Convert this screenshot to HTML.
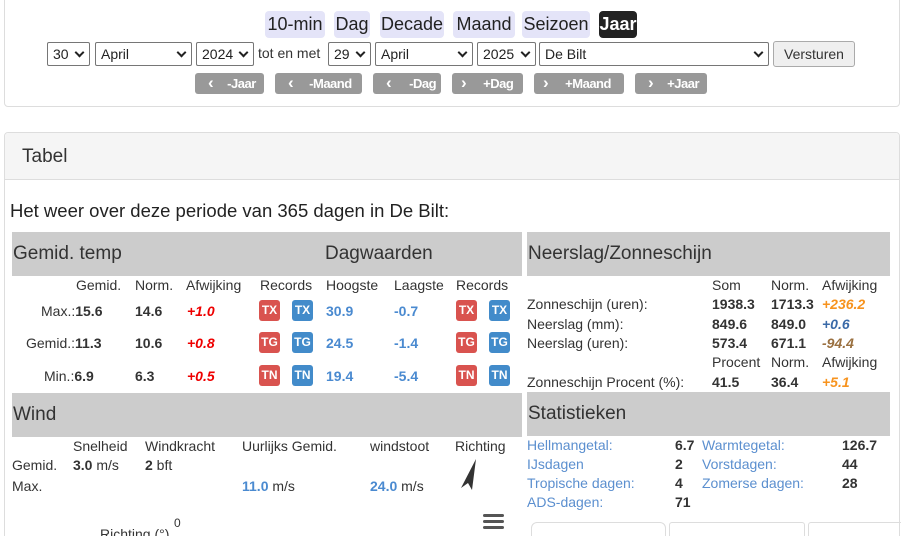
<!DOCTYPE html>
<html><head><meta charset="utf-8"><style>
*{box-sizing:border-box;margin:0;padding:0}
html,body{width:901px;height:536px;overflow:hidden}
body{background:#fff;font-family:"Liberation Sans",sans-serif;color:#333;font-size:14px;position:relative}
.a{position:absolute;white-space:nowrap}
.panel{position:absolute;border:1px solid #ddd;border-radius:4px}
.tab{position:absolute;top:11px;height:27px;background:#e4e4f8;border-radius:4px;font-size:18px;line-height:27px;text-align:center;color:#222}
.sel{position:absolute;top:42px;height:24px;border:1px solid #767676;border-radius:2px;font-size:14px;line-height:22px;padding-left:5px;background:#fff;color:#222}
.sel:after{content:"";position:absolute;right:6px;top:6px;width:5px;height:5px;border-right:2px solid #222;border-bottom:2px solid #222;transform:rotate(45deg)}
.nb{position:absolute;top:73px;height:21px;background:#999;color:#fff;border-radius:3px;font-size:13px;font-weight:bold;line-height:21px;letter-spacing:-.5px}
.nb i{font-style:normal;font-size:17px;display:inline-block;vertical-align:top;line-height:19px}
.gh{position:absolute;background:#ccc;font-size:19px;color:#333;padding-left:1px}
.b{font-weight:bold}
.bl{color:#4a8ad0;font-weight:bold}
.rd{color:#e00;font-weight:bold;font-style:italic}
.bd{position:absolute;width:21px;height:21px;border-radius:3px;color:#fff;font-weight:bold;font-size:12px;line-height:21px;text-align:center}
.r{background:#d9534f}.u{background:#428bca}
.lk{color:#5b8fcf}
</style></head><body>
<div class="panel" style="left:4px;top:-4px;width:896px;height:111px"></div>
<div class="tab" style="left:265px;width:60px">10-min</div>
<div class="tab" style="left:334px;width:36px">Dag</div>
<div class="tab" style="left:380px;width:64px">Decade</div>
<div class="tab" style="left:453px;width:62px">Maand</div>
<div class="tab" style="left:522px;width:68px">Seizoen</div>
<div class="tab" style="left:599px;width:38px;background:#222;color:#fff;font-weight:bold">Jaar</div>
<div class="sel" style="left:47px;width:43px">30</div>
<div class="sel" style="left:95px;width:97px">April</div>
<div class="sel" style="left:196px;width:58px">2024</div>
<div class="a" style="left:258px;top:45px;font-size:14px">tot en met</div>
<div class="sel" style="left:328px;width:43px">29</div>
<div class="sel" style="left:375px;width:98px">April</div>
<div class="sel" style="left:477px;width:59px">2025</div>
<div class="sel" style="left:539px;width:230px">De Bilt</div>
<div class="a" style="left:773px;top:41px;width:82px;height:26px;border:1px solid #aaa;border-radius:3px;background:#efefef;font-size:14px;line-height:24px;text-align:center">Versturen</div>
<div class="nb" style="left:195px;width:69px"><i style="margin-left:13px">‹</i><span style="margin-left:14px">-Jaar</span></div>
<div class="nb" style="left:275px;width:87px"><i style="margin-left:13px">‹</i><span style="margin-left:16px">-Maand</span></div>
<div class="nb" style="left:373px;width:68px"><i style="margin-left:13px">‹</i><span style="margin-left:18px">-Dag</span></div>
<div class="nb" style="left:452px;width:71px"><i style="margin-left:9px">›</i><span style="margin-left:17px">+Dag</span></div>
<div class="nb" style="left:534px;width:90px"><i style="margin-left:9px">›</i><span style="margin-left:17px">+Maand</span></div>
<div class="nb" style="left:635px;width:72px"><i style="margin-left:13px">›</i><span style="margin-left:14px">+Jaar</span></div>

<div class="panel" style="left:4px;top:132px;width:896px;height:420px"></div>
<div class="a" style="left:5px;top:133px;width:894px;height:47px;background:#f5f5f5;border-bottom:1px solid #ddd;border-radius:4px 4px 0 0"></div>
<div class="a" style="left:22px;top:146px;font-size:19px">Tabel</div>
<div class="a" style="left:10px;top:200px;font-size:18.5px;color:#222">Het weer over deze periode van 365 dagen in De Bilt:</div>

<div class="gh" style="left:12px;top:232px;width:510px;height:44px;line-height:44px">Gemid. temp<span style="position:absolute;left:313px">Dagwaarden</span></div>
<div class="a" style="left:76px;top:277px">Gemid.</div>
<div class="a" style="left:135px;top:277px">Norm.</div>
<div class="a" style="left:186px;top:277px">Afwijking</div>
<div class="a" style="left:260px;top:277px">Records</div>
<div class="a" style="left:326px;top:277px">Hoogste</div>
<div class="a" style="left:394px;top:277px">Laagste</div>
<div class="a" style="left:456px;top:277px">Records</div>

<div class="a" style="left:41px;top:303px">Max.:<b>15.6</b></div>
<div class="a b" style="left:135px;top:303px">14.6</div>
<div class="a rd" style="left:187px;top:303px">+1.0</div>
<div class="bd r" style="left:259px;top:300px">TX</div><div class="bd u" style="left:292px;top:300px">TX</div>
<div class="a bl" style="left:326px;top:303px">30.9</div>
<div class="a bl" style="left:394px;top:303px">-0.7</div>
<div class="bd r" style="left:456px;top:300px">TX</div><div class="bd u" style="left:489px;top:300px">TX</div>

<div class="a" style="left:26px;top:335px">Gemid.:<b>11.3</b></div>
<div class="a b" style="left:135px;top:335px">10.6</div>
<div class="a rd" style="left:187px;top:335px">+0.8</div>
<div class="bd r" style="left:259px;top:332px">TG</div><div class="bd u" style="left:292px;top:332px">TG</div>
<div class="a bl" style="left:326px;top:335px">24.5</div>
<div class="a bl" style="left:394px;top:335px">-1.4</div>
<div class="bd r" style="left:456px;top:332px">TG</div><div class="bd u" style="left:489px;top:332px">TG</div>

<div class="a" style="left:44px;top:368px">Min.:<b>6.9</b></div>
<div class="a b" style="left:135px;top:368px">6.3</div>
<div class="a rd" style="left:187px;top:368px">+0.5</div>
<div class="bd r" style="left:259px;top:365px">TN</div><div class="bd u" style="left:292px;top:365px">TN</div>
<div class="a bl" style="left:326px;top:368px">19.4</div>
<div class="a bl" style="left:394px;top:368px">-5.4</div>
<div class="bd r" style="left:456px;top:365px">TN</div><div class="bd u" style="left:489px;top:365px">TN</div>

<div class="gh" style="left:12px;top:393px;width:510px;height:44px;line-height:44px">Wind</div>
<div class="a" style="left:73px;top:438px">Snelheid</div>
<div class="a" style="left:145px;top:438px">Windkracht</div>
<div class="a" style="left:242px;top:438px">Uurlijks Gemid.</div>
<div class="a" style="left:370px;top:438px">windstoot</div>
<div class="a" style="left:455px;top:438px">Richting</div>
<div class="a" style="left:12px;top:457px">Gemid.</div>
<div class="a" style="left:73px;top:457px"><b>3.0</b> m/s</div>
<div class="a" style="left:145px;top:457px"><b>2</b> bft</div>
<div class="a" style="left:12px;top:478px">Max.</div>
<div class="a" style="left:242px;top:478px"><span class="bl">11.0</span> m/s</div>
<div class="a" style="left:370px;top:478px"><span class="bl">24.0</span> m/s</div>
<svg class="a" style="left:458px;top:458px" width="20" height="34"><path d="M18 1 L3 30 L10 25 L14 32 Z" fill="#333"/></svg>
<div class="a" style="left:174px;top:516px;font-size:12px">0</div>
<div class="a" style="left:100px;top:526px;font-size:14px">Richting (°)</div>
<svg class="a" style="left:483px;top:513px" width="22" height="18"><rect x="0" y="1" width="21" height="3" rx="1.5" fill="#555"/><rect x="0" y="7" width="21" height="3" rx="1.5" fill="#555"/><rect x="0" y="13" width="21" height="3" rx="1.5" fill="#555"/></svg>

<div class="gh" style="left:527px;top:232px;width:363px;height:44px;line-height:44px">Neerslag/Zonneschijn</div>
<div class="a" style="left:712px;top:277px">Som</div>
<div class="a" style="left:771px;top:277px">Norm.</div>
<div class="a" style="left:822px;top:277px">Afwijking</div>
<div class="a" style="left:527px;top:296px">Zonneschijn (uren):</div>
<div class="a b" style="left:712px;top:296px">1938.3</div>
<div class="a b" style="left:771px;top:296px">1713.3</div>
<div class="a" style="left:822px;top:296px;color:#f7931e;font-weight:bold;font-style:italic">+236.2</div>
<div class="a" style="left:527px;top:316px">Neerslag (mm):</div>
<div class="a b" style="left:712px;top:316px">849.6</div>
<div class="a b" style="left:771px;top:316px">849.0</div>
<div class="a" style="left:822px;top:316px;color:#3a6aa8;font-weight:bold;font-style:italic">+0.6</div>
<div class="a" style="left:527px;top:335px">Neerslag (uren):</div>
<div class="a b" style="left:712px;top:335px">573.4</div>
<div class="a b" style="left:771px;top:335px">671.1</div>
<div class="a" style="left:822px;top:335px;color:#9a7040;font-weight:bold;font-style:italic">-94.4</div>
<div class="a" style="left:712px;top:354px">Procent</div>
<div class="a" style="left:771px;top:354px">Norm.</div>
<div class="a" style="left:822px;top:354px">Afwijking</div>
<div class="a" style="left:527px;top:374px">Zonneschijn Procent (%):</div>
<div class="a b" style="left:712px;top:374px">41.5</div>
<div class="a b" style="left:771px;top:374px">36.4</div>
<div class="a" style="left:822px;top:374px;color:#f7931e;font-weight:bold;font-style:italic">+5.1</div>

<div class="gh" style="left:527px;top:392px;width:363px;height:44px;line-height:44px">Statistieken</div>
<div class="a lk" style="left:527px;top:437px">Hellmangetal:</div><div class="a b" style="left:675px;top:437px">6.7</div>
<div class="a lk" style="left:702px;top:437px">Warmtegetal:</div><div class="a b" style="left:842px;top:437px">126.7</div>
<div class="a lk" style="left:527px;top:456px">IJsdagen</div><div class="a b" style="left:675px;top:456px">2</div>
<div class="a lk" style="left:702px;top:456px">Vorstdagen:</div><div class="a b" style="left:842px;top:456px">44</div>
<div class="a lk" style="left:527px;top:475px">Tropische dagen:</div><div class="a b" style="left:675px;top:475px">4</div>
<div class="a lk" style="left:702px;top:475px">Zomerse dagen:</div><div class="a b" style="left:842px;top:475px">28</div>
<div class="a lk" style="left:527px;top:494px">ADS-dagen:</div><div class="a b" style="left:675px;top:494px">71</div>
<div class="a" style="left:531px;top:522px;width:135px;height:30px;border:1px solid #ddd;border-radius:6px"></div>
<div class="a" style="left:669px;top:522px;width:136px;height:30px;border:1px solid #ddd;border-radius:3px"></div>
<div class="a" style="left:808px;top:522px;width:100px;height:30px;border:1px solid #ddd;border-radius:3px"></div>
</body></html>
